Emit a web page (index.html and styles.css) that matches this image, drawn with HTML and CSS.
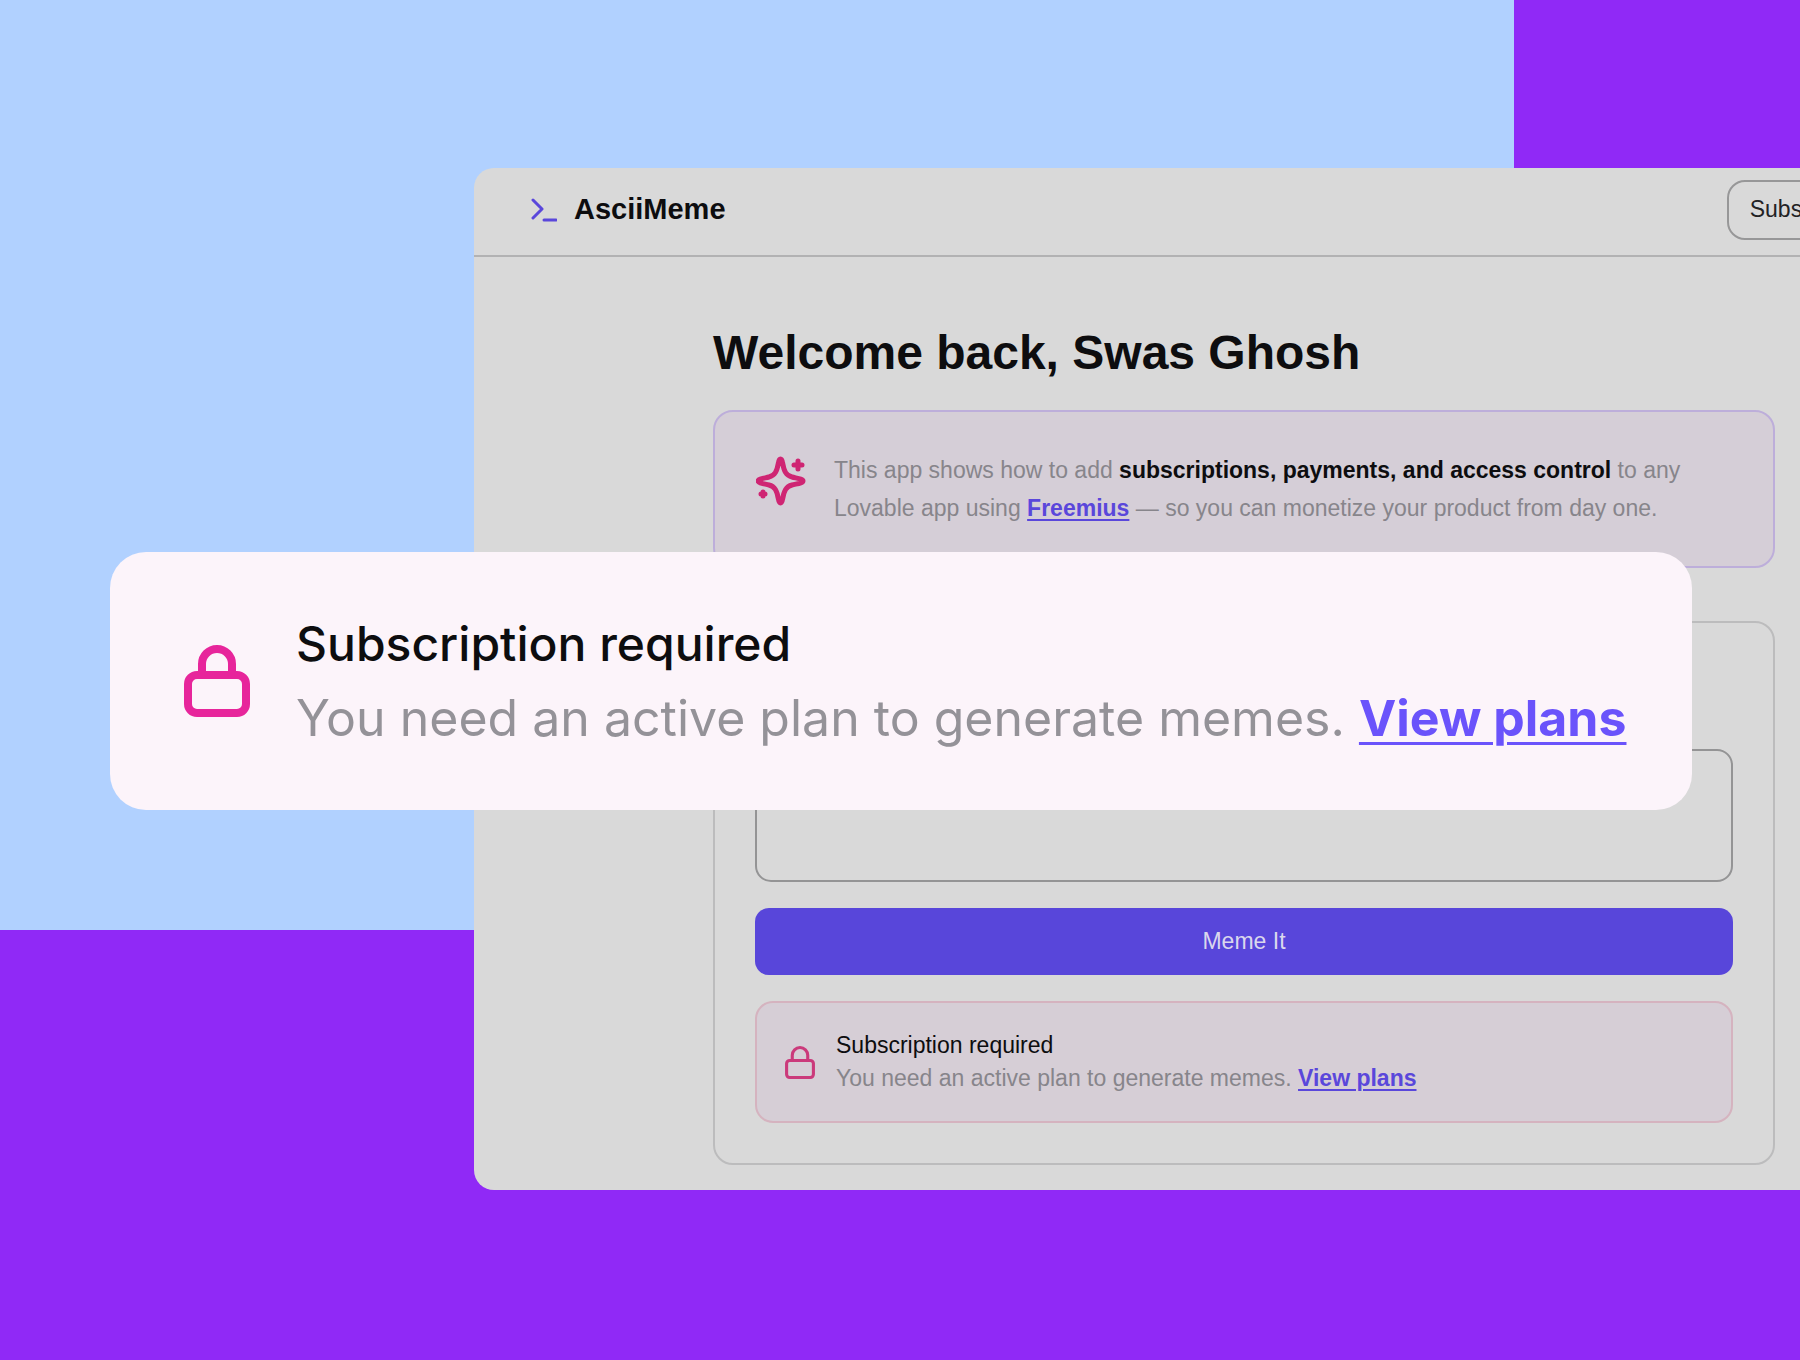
FILE: index.html
```html
<!DOCTYPE html>
<html lang="en">
<head>
<meta charset="utf-8">
<meta name="viewport" content="width=device-width, initial-scale=1">
<title>AsciiMeme</title>
<link rel="stylesheet" href="styles.css">
</head>
<body>
<div class="stage">
  <div class="window">
    <header class="topbar">
      <div class="brand">
        <svg class="brand-icon" viewBox="0 0 28 28" aria-hidden="true"><path d="M4 4l9 9-9 9M15 24h12"/></svg>
        <span>AsciiMeme</span>
      </div>
      <button class="outline-button" type="button">Subscribe</button>
    </header>
    <main class="content">
      <h1 class="welcome">Welcome back, Swas Ghosh</h1>
      <section class="notice">
        <svg class="sparkle-icon" viewBox="0 0 50 50" aria-hidden="true">
          <path d="M24.500 3C23 3 22.700 5 22.400 7C21 15 19 19.500 13 21C8 22.300 2 23 2 25C2 27 8 27.700 13 29C19 30.500 21 35 22.400 43C22.700 45 23 47 24.500 47C26 47 26.300 45 26.600 43C28 35 30 30.500 36 29C41 27.700 47 27 47 25C47 23 41 22.300 36 21C30 19.500 28 15 26.600 7C26.300 5 26 3 24.500 3Z"/>
          <path d="M42 5v8M38 9h8"/>
          <path d="M7 36v4M5 38h4"/>
        </svg>
        <p class="notice-text">This app shows how to add <strong>subscriptions, payments, and access control</strong> to any Lovable app using <a href="#freemius">Freemius</a> — so you can monetize your product from day one.</p>
      </section>
      <form class="generator">
        <textarea class="prompt" aria-label="Meme prompt"></textarea>
        <button class="primary-button" type="button">Meme It</button>
        <div class="alert">
          <svg class="lock-icon" viewBox="0 0 58 64" aria-hidden="true"><rect x="3" y="28" width="52" height="33" rx="6"/><path d="M14 28V18a15 15 0 0 1 30 0v10"/></svg>
          <div>
            <p class="alert-title">Subscription required</p>
            <p class="alert-text">You need an active plan to generate memes. <a href="#plans">View plans</a></p>
          </div>
        </div>
      </form>
    </main>
  </div>
  <aside class="callout">
    <svg class="callout-icon" viewBox="0 0 66 72" aria-hidden="true"><rect x="4" y="30" width="58" height="38" rx="9"/><path d="M18 30V19a15 15 0 0 1 30 0v11"/></svg>
    <div class="callout-body">
      <p class="callout-title">Subscription required</p>
      <p class="callout-text">You need an active plan to generate memes. <a href="#plans">View plans</a></p>
    </div>
  </aside>
</div>
</body>
</html>
```
FILE: styles.css
```css
:root {
  --purple: #9029f6;
  --sky: #b1d1ff;
  --surface: #d9d9d9;
  --ink: #0d0d0f;
  --muted: #87858b;
  --indigo: #5a47db;
  --pink: #cf2573;
}

* {
  box-sizing: border-box;
}

body {
  margin: 0;
  background: var(--purple);
  color: var(--ink);
  font-family: "Liberation Sans", Arial, sans-serif;
  font-size: 23px;
}

h1,
p {
  margin: 0;
}

a {
  color: var(--indigo);
  font-weight: 700;
  text-decoration-thickness: 2px;
  text-underline-offset: 3px;
}

svg {
  flex: none;
  fill: none;
  stroke: var(--pink);
  stroke-linecap: round;
  stroke-linejoin: round;
}

button {
  font: inherit;
}

.stage {
  position: relative;
  min-height: 100vh;
  padding: 168px 0 168px 474px;
  overflow: hidden;
  background: linear-gradient(var(--sky), var(--sky)) no-repeat 0 0 / calc(100% - 286px) 930px;
}

.window {
  overflow: hidden;
  background: var(--surface);
  border-radius: 20px 0 0 20px;
}

.topbar {
  display: flex;
  align-items: center;
  justify-content: space-between;
  height: 89px;
  padding: 0 0 4px 55px;
  border-bottom: 2px solid #b2b2b3;
}

.brand {
  display: flex;
  align-items: center;
  gap: 17px;
  font-size: 29px;
  font-weight: 700;
}

.brand-icon {
  width: 28px;
  height: 28px;
  stroke: var(--indigo);
  stroke-width: 3;
}

.outline-button {
  height: 60px;
  margin-right: -75px;
  padding: 0 21px;
  background: transparent;
  border: 2px solid #979798;
  border-radius: 18px;
  color: #222224;
}

.content {
  padding: 63px 25px 25px 239px;
}

.welcome {
  margin-bottom: 24px;
  font-size: 48px;
  line-height: 66px;
}

.notice {
  display: flex;
  gap: 28px;
  margin-bottom: 53px;
  padding: 39px 40px 39px 41px;
  background: #d5ced7;
  border: 2px solid #bdaeda;
  border-radius: 20px;
}

.sparkle-icon {
  width: 50px;
  height: 50px;
  margin-top: 5px;
  stroke-width: 5;
}

.notice-text {
  color: var(--muted);
  line-height: 38px;
}

.notice-text strong {
  color: var(--ink);
}

.generator {
  display: flex;
  flex-direction: column;
  gap: 26px;
  padding: 126px 40px 40px;
  border: 2px solid #bcbcbd;
  border-radius: 20px;
}

.prompt {
  height: 133px;
  padding: 16px;
  background: transparent;
  border: 2px solid #949495;
  border-radius: 16px;
  font: inherit;
  resize: none;
}

.primary-button {
  height: 67px;
  background: #5846da;
  border: 0;
  border-radius: 14px;
  color: #dad7ed;
}

.alert {
  display: flex;
  align-items: center;
  gap: 21px;
  padding: 26px 28px;
  background: #d6ced6;
  border: 2px solid #d5b3bf;
  border-radius: 18px;
  line-height: 33px;
}

.lock-icon {
  width: 30px;
  height: 33px;
  stroke: #cb3a7b;
  stroke-width: 6;
}

.alert-text {
  color: var(--muted);
}

.callout {
  position: absolute;
  top: 552px;
  right: 108px;
  left: 110px;
  display: flex;
  align-items: center;
  gap: 46px;
  padding: 55px 74px;
  background: #fcf4fa;
  border-radius: 36px;
  font-family: Inter, "Noto Sans", sans-serif;
  line-height: 74px;
  white-space: nowrap;
}

.callout-icon {
  width: 66px;
  height: 72px;
  stroke: #e7259b;
  stroke-width: 8;
}

.callout-title {
  font-size: 48px;
  font-weight: 500;
}

.callout-text {
  color: #949298;
  font-size: 50px;
}

.callout-text a {
  color: #6a53fb;
  text-decoration-thickness: 3px;
  text-underline-offset: 6px;
}
```
